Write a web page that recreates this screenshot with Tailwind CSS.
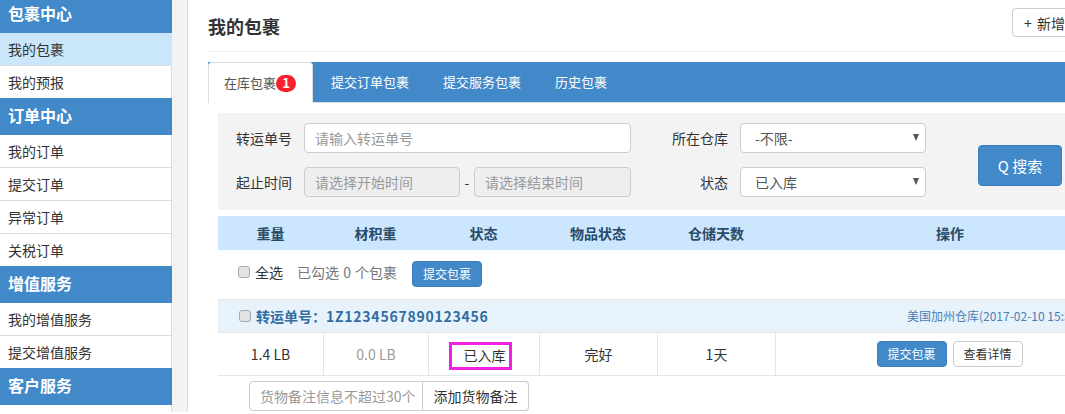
<!DOCTYPE html>
<html lang="zh-CN">

<head>
  <meta charset="UTF-8" />
  <title>我的包裹</title>
  <script src="https://cdn.jsdelivr.net/npm/@tailwindcss/browser@4"></script>
</head>

<body class="h-[414px] w-[1065px] overflow-hidden bg-white font-['Noto_Sans_CJK_SC',sans-serif] text-sm text-[#333]">
  <div class="flex h-[412px] w-[1065px]">
    <!-- sidebar -->
    <aside class="w-[172px] shrink-0 border-r border-[#ddd]">
      <div class="-mr-px flex h-[33px] items-center bg-[#4189c9] pb-2 pl-2 text-base font-bold text-white">包裹中心</div>
      <div class="flex h-[33px] items-center border-b border-[#ddd] bg-[#c9e6fa] pl-2">我的包裹</div>
      <div class="flex h-[32px] items-center pl-2">我的预报</div>
      <div class="-mr-px flex h-[37px] items-center bg-[#4189c9] pb-1 pl-2 text-base font-bold text-white">订单中心</div>
      <div class="flex h-[33px] items-center border-b border-[#ddd] pl-2">我的订单</div>
      <div class="flex h-[33px] items-center border-b border-[#ddd] pl-2">提交订单</div>
      <div class="flex h-[33px] items-center border-b border-[#ddd] pl-2">异常订单</div>
      <div class="flex h-[32px] items-center pl-2">关税订单</div>
      <div class="-mr-px flex h-[37px] items-center bg-[#4189c9] pb-1 pl-2 text-base font-bold text-white">增值服务</div>
      <div class="flex h-[33px] items-center border-b border-[#ddd] pl-2">我的增值服务</div>
      <div class="flex h-[32px] items-center pl-2">提交增值服务</div>
      <div class="-mr-px flex h-[37px] items-center bg-[#4189c9] pb-1 pl-2 text-base font-bold text-white">客户服务</div>
    </aside>
    <div class="w-[16px] shrink-0 border-r border-[#ddd] bg-[#f3f3f3]"></div>

    <!-- main -->
    <main class="w-[877px] shrink-0 pl-5">
      <div class="flex h-[52px] items-start justify-between border-b border-[#eee]">
        <h1 class="mt-[13px] text-lg leading-[26px] font-bold text-[#333]">我的包裹</h1>
        <button class="mt-2 -mr-[27px] h-[29px] w-[80px] shrink-0 rounded border border-[#ccc] pl-[11px] text-left text-sm [word-spacing:2px]">+ 新增</button>
      </div>

      <nav class="mt-[10px] flex h-[41px] border-b border-[#ddd] bg-[#4189c9] text-[13px] text-white">
        <div class="flex h-[41px] w-[105px] items-center rounded-t border border-b-0 border-[#ddd] bg-white pl-[15px] text-[#555]">
          在库包裹<span class="flex h-[17px] w-5 items-center justify-center rounded-full bg-[#f5222d] text-[13px] font-bold text-white">1</span>
        </div>
        <div class="ml-[18px] flex items-center">提交订单包裹</div>
        <div class="ml-[34px] flex items-center">提交服务包裹</div>
        <div class="ml-[34px] flex items-center">历史包裹</div>
      </nav>

      <form class="mt-[10px] ml-[10px] flex h-[97px] bg-[#f3f3f3] pt-[10px]">
        <div class="flex w-[708px] shrink-0 flex-col gap-[14px]">
          <div class="flex items-center">
            <label class="w-[74px] text-right">转运单号</label>
            <input class="ml-3 h-[30px] w-[327px] rounded border border-[#ccc] bg-white px-[10px] placeholder:text-[#999]" placeholder="请输入转运单号" />
            <label class="w-[97px] text-right">所在仓库</label>
            <div class="relative ml-3 w-[186px]">
              <select class="h-[30px] w-full appearance-none rounded border border-[#ccc] bg-white pl-[14px] text-[#555]">
                <option>-不限-</option>
              </select>
              <svg class="absolute top-[11px] right-[7px]" width="6" height="7" viewBox="0 0 6 7"><path d="M0 0H6L3 7Z" fill="#555" /></svg>
            </div>
          </div>
          <div class="flex items-center">
            <label class="w-[74px] text-right">起止时间</label>
            <input class="ml-3 h-[30px] w-[156px] rounded border border-[#ccc] bg-[#eee] px-[10px] placeholder:text-[#999]" placeholder="请选择开始时间" disabled />
            <span class="w-[14px] text-center">-</span>
            <input class="h-[30px] w-[157px] rounded border border-[#ccc] bg-[#eee] px-[10px] placeholder:text-[#999]" placeholder="请选择结束时间" disabled />
            <label class="w-[97px] text-right">状态</label>
            <div class="relative ml-3 w-[186px]">
              <select class="h-[30px] w-full appearance-none rounded border border-[#ccc] bg-white pl-[14px] text-[#555]">
                <option>已入库</option>
              </select>
              <svg class="absolute top-[11px] right-[7px]" width="6" height="7" viewBox="0 0 6 7"><path d="M0 0H6L3 7Z" fill="#555" /></svg>
            </div>
          </div>
        </div>
        <button type="button" class="mt-[22px] ml-[52px] h-[41px] w-[84px] shrink-0 rounded border border-[#3a7fbd] bg-[#4189c9] text-[15px] text-white">Q 搜索</button>
      </form>

      <section class="mt-[6px] ml-[10px] w-[907px]">
        <div class="flex h-[34px] items-center bg-[#cce6fd] text-center font-bold text-[#2a4a68]">
          <div class="w-[105px]">重量</div>
          <div class="w-[105px]">材积重</div>
          <div class="w-[111px]">状态</div>
          <div class="w-[118px]">物品状态</div>
          <div class="w-[118px]">仓储天数</div>
          <div class="w-[350px]">操作</div>
        </div>

        <div class="flex h-[49px] items-center pb-[2px] pl-5">
          <div class="flex items-center pb-1">
            <input type="checkbox" class="h-3 w-3 appearance-none rounded-[3px] border border-[#aaa] bg-[#e2e2e2]" />
            <span class="ml-[5px]">全选</span>
            <span class="ml-[14px] w-[100px] whitespace-nowrap text-[#777] [word-spacing:1px]">已勾选 0 个包裹</span>
          </div>
          <button class="ml-[15px] h-[26px] w-[70px] rounded border border-[#3a7fbd] bg-[#4189c9] text-xs text-white">提交包裹</button>
        </div>

        <div class="flex h-[34px] items-center justify-between border-y border-[#e6e6e6] bg-[#e8f2fb] pr-[27px] pl-[21px]">
          <div class="flex items-center font-bold text-[#2f6da4]">
            <input type="checkbox" class="h-3 w-3 appearance-none rounded-[3px] border border-[#aaa] bg-[#e2e2e2]" />
            <span class="ml-[5px]">转运单号<span class="font-['Noto_Sans_CJK_TC',sans-serif]">：</span></span><span class="tracking-[0.75px]">1Z1234567890123456</span>
          </div>
          <div class="text-xs text-[#4a7fb5]">美国加州仓库(2017-02-10 15:30:20)</div>
        </div>

        <div class="flex h-[43px] border-b border-[#e6e6e6] text-center">
          <div class="flex w-[105px] items-center justify-center">1.4 LB</div>
          <div class="flex w-[105px] items-center justify-center border-l border-[#e6e6e6] text-[#999]">0.0 LB</div>
          <div class="flex w-[111px] items-center justify-center border-l border-[#e6e6e6] pt-1 pr-2">
            <span class="h-[28px] w-[63px] border-[3px] border-[#f01ee6] pl-[12px] text-left leading-[20px] whitespace-nowrap">已入库</span>
          </div>
          <div class="flex w-[118px] items-center justify-center border-l border-[#e6e6e6]">完好</div>
          <div class="flex w-[118px] items-center justify-center border-l border-[#e6e6e6]">1天</div>
          <div class="flex w-[350px] items-center justify-center gap-[6px] border-l border-[#e6e6e6] pr-[2px]">
            <button class="h-[26px] w-[70px] rounded border border-[#3a7fbd] bg-[#4189c9] text-xs text-white">提交包裹</button>
            <button class="h-[26px] w-[70px] rounded border border-[#ccc] bg-white text-xs">查看详情</button>
          </div>
        </div>

        <div class="mt-[5px] ml-[31px] flex h-[30px] w-[280px]">
          <input class="w-[174px] rounded-l border border-[#ccc] pl-[10px] placeholder:text-[#999]" placeholder="货物备注信息不超过30个" />
          <button class="w-[106px] rounded-r border border-l-0 border-[#ccc] bg-white">添加货物备注</button>
        </div>
      </section>
    </main>
  </div>
</body>

</html>
